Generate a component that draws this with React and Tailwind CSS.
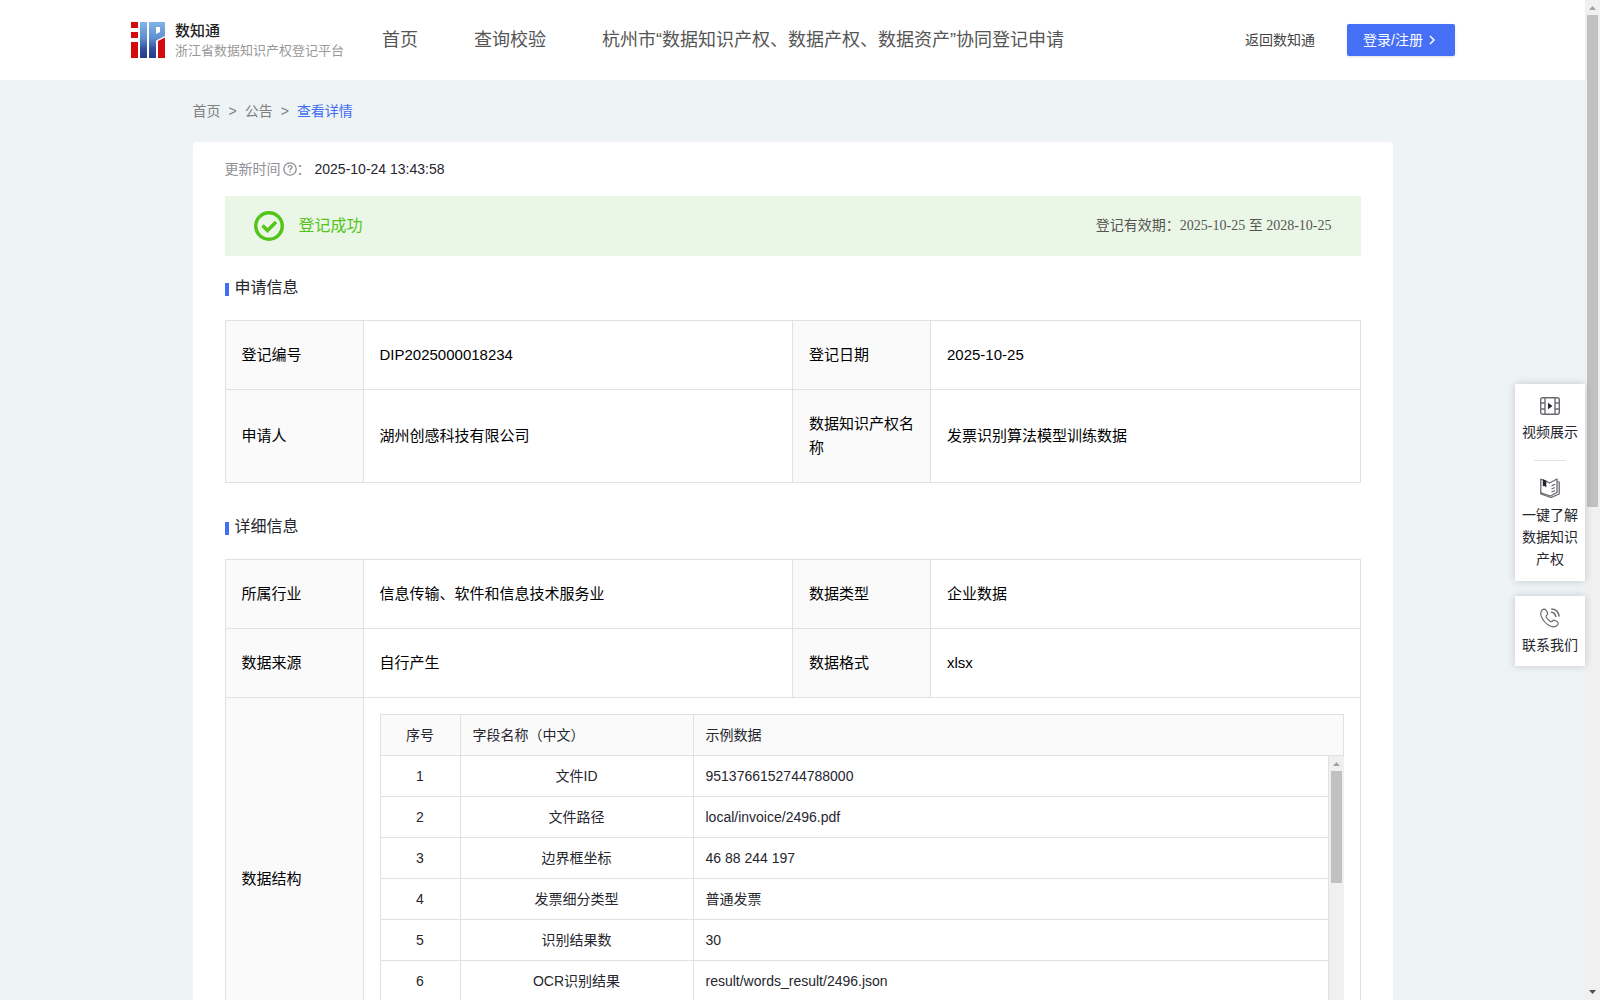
import React from "react";

const sampleRows = [
  ["文件ID", "9513766152744788000"],
  ["文件路径", "local/invoice/2496.pdf"],
  ["边界框坐标", "46 88 244 197"],
  ["发票细分类型", "普通发票"],
  ["识别结果数", "30"],
  ["OCR识别结果", "result/words_result/2496.json"],
];

function Logo() {
  return (
    <svg width="34" height="36" viewBox="0 0 34 36" aria-hidden="true">
      <defs>
        <linearGradient id="logoBlue" x1="0" y1="0" x2="0" y2="36" gradientUnits="userSpaceOnUse">
          <stop offset="0" stopColor="#83b4e8" />
          <stop offset="0.45" stopColor="#5f8fd0" />
          <stop offset="0.75" stopColor="#34509c" />
          <stop offset="1" stopColor="#263a88" />
        </linearGradient>
      </defs>
      <path d="M0 0h7v6H0zM0 10h7v6H0zM0 20h7v16H0z" fill="#d30a0e" />
      <path d="M9 0h7v36H9z" fill="url(#logoBlue)" />
      <path fillRule="evenodd" d="M18 0h16v14l-9 4.500V36h-7zM25 5v7l4-2V5z" fill="url(#logoBlue)" />
      <path d="M27 19l7-3.500V36h-7z" fill="#d30a0e" />
    </svg>
  );
}

function SuccessIcon() {
  return (
    <svg width="30" height="30" viewBox="0 0 30 30" fill="none" stroke="#52c41a" aria-hidden="true">
      <circle cx="15" cy="15" r="13.250" strokeWidth="3.500" />
      <path d="M8.500 14.500l5 5 8.500-8.500" strokeWidth="3.500" />
    </svg>
  );
}

function HelpIcon() {
  return (
    <svg width="14" height="14" viewBox="0 0 14 14" fill="none" stroke="#8f8f94" strokeWidth="1.300" aria-hidden="true">
      <circle cx="7" cy="7" r="6.200" />
      <path d="M5.100 5.600c0-2.500 3.800-2.500 3.800-.2 0 1.300-1.900 1.300-1.900 2.800M7 9.300v1.200" />
    </svg>
  );
}

function VideoIcon() {
  return (
    <svg width="20" height="18" viewBox="0 0 20 18" fill="none" stroke="#6a6b72" strokeWidth="1.400" aria-hidden="true">
      <rect x="0.700" y="0.700" width="18.600" height="16.600" rx="2" />
      <path d="M5 1v16M15 1v16M1 6h4M1 12h4M15 6h4M15 12h4" />
      <path d="M8 5.800v6.400l4.500-3.200z" fill="#26262e" stroke="none" />
    </svg>
  );
}

function BookIcon() {
  return (
    <svg width="20" height="20" viewBox="0 0 20 20" fill="none" stroke="#6a6b72" strokeWidth="1.300" strokeLinejoin="round" aria-hidden="true">
      <path d="M5.500 2.800L9.500 5 17 1v13.500L10.500 18 .8 14.800V1.200L3 2" />
      <path d="M17.500 3.500l1.700.5v12L11 19.500.8 16v-2" />
      <path d="M11.500 8l3.500-1.800M11.500 11l3.500-1.500M11.500 14l3.500-1.500" />
      <path d="M2.800 1L6.300 2.800v6.700L4.500 8l-1.700.3z" fill="#26262e" stroke="none" />
    </svg>
  );
}

function PhoneIcon() {
  return (
    <svg width="20" height="20" viewBox="0 0 20 20" fill="none" stroke="#6a6b72" strokeWidth="1.200" strokeLinejoin="round" strokeLinecap="round" aria-hidden="true">
      <path d="M2 2.200C3.500.7 5 .7 6 2.200l1.300 2.200c.7 1.200.3 2-.6 2.800-.8.700-.7 1.400-.2 2.300.9 1.500 2 2.700 3.600 3.700.9.600 1.700.6 2.400-.2.800-.9 1.600-1.200 2.700-.5l2 1.300c1.400 1 1.300 2.200.2 3.400-1.900 2-4.300 2.200-7.200.8C6 16 3 12.700 1.400 8.600.4 5.900.4 3.800 2 2.200z" />
      <path d="M11.500 4.200c2.300.3 3.800 1.800 4.200 4.200M11.800 1c4.100.4 6.700 3 7.200 7" strokeWidth="1.500" />
    </svg>
  );
}

function ScrollBar({ thumb, end }) {
  return (
    <div className="flex w-[15px] shrink-0 flex-col items-center bg-[#f0f0f0]" aria-hidden="true">
      <svg className="shrink-0" width="15" height="15" viewBox="0 0 15 15">
        <path d="M4 10h7L7.500 6z" fill="#a3a3a3" />
      </svg>
      <div className={thumb} />
      {end && (
        <svg className="mt-auto shrink-0" width="15" height="15" viewBox="0 0 15 15">
          <path d="M4 5h7L7.500 9z" fill="#505050" />
        </svg>
      )}
    </div>
  );
}

function SectionTitle({ children }) {
  return (
    <h2 className="flex items-center gap-1.5 text-base leading-6 text-[#26262e]">
      <span className="mt-0.5 h-[13px] w-1 bg-[#416df5]" />
      {children}
    </h2>
  );
}

const cell = "border border-[#e1e1e1] px-4 py-[22px] text-left font-normal";

function Label({ children }) {
  return <th scope="row" className={`${cell} bg-[#fafafa]`}>{children}</th>;
}

function Value({ children }) {
  return <td className={cell}>{children}</td>;
}

function InfoTable({ rows, children }) {
  return (
    <table className="w-full table-fixed border-collapse text-[15px] leading-6 text-black">
      <colgroup>
        <col className="w-[138px]" />
        <col />
        <col className="w-[138px]" />
        <col />
      </colgroup>
      <tbody>
        {rows.map(([a, b, c, d]) => (
          <tr key={a}>
            <Label>{a}</Label>
            <Value>{b}</Value>
            <Label>{c}</Label>
            <Value>{d}</Value>
          </tr>
        ))}
        {children}
      </tbody>
    </table>
  );
}

function FieldCols() {
  return (
    <colgroup>
      <col className="w-20" />
      <col className="w-[233px]" />
      <col />
    </colgroup>
  );
}

function FieldTable() {
  return (
    <div className="text-sm leading-[22px] text-[#26262e]">
      <table className="w-full table-fixed border-collapse bg-[#fafafa]">
        <FieldCols />
        <thead>
          <tr>
            <th className="border border-[#e1e1e1] py-[9px] font-normal">序号</th>
            <th className="border border-[#e1e1e1] px-3 py-[9px] text-left font-normal">字段名称（中文）</th>
            <th className="border border-[#e1e1e1] px-3 py-[9px] text-left font-normal">示例数据</th>
          </tr>
        </thead>
      </table>
      <div className="flex h-[287px] overflow-hidden">
        <div className="min-w-0 flex-1">
          <table className="w-full table-fixed border-collapse">
            <FieldCols />
            <tbody>
              {sampleRows.map(([name, value], i) => (
                <tr key={name}>
                  <td className="border border-t-0 border-[#e1e1e1] py-[9px] text-center">{i + 1}</td>
                  <td className="border border-t-0 border-[#e1e1e1] px-3 py-[9px] text-center">{name}</td>
                  <td className="border border-t-0 border-[#e1e1e1] px-3 py-[9px]">{value}</td>
                </tr>
              ))}
            </tbody>
          </table>
        </div>
        <ScrollBar thumb="h-28 w-[11px] bg-[#c1c1c1]" />
      </div>
    </div>
  );
}

function Header() {
  return (
    <header className="flex h-20 items-center bg-white px-[130px]">
      <div className="flex w-[252px] shrink-0 items-center gap-2.5 pl-px">
        <Logo />
        <div className="pt-0.5">
          <div className="text-[15px] leading-5 font-medium text-[#222]">数知通</div>
          <div className="text-[13px] leading-5 whitespace-nowrap text-[#999]">浙江省数据知识产权登记平台</div>
        </div>
      </div>
      <nav className="flex gap-14 text-lg leading-6 whitespace-nowrap text-[#555]">
        <a href="#home">首页</a>
        <a href="#query">查询校验</a>
        <a href="#apply">杭州市“数据知识产权、数据产权、数据资产”协同登记申请</a>
      </nav>
      <a href="#back" className="ml-auto text-sm whitespace-nowrap text-[#444]">返回数知通</a>
      <button className="ml-8 flex h-8 w-[108px] items-center gap-1 rounded-xs bg-[#456ff5] pl-4 text-sm whitespace-nowrap text-white shadow-sm">
        登录/注册
        <svg width="10" height="10" viewBox="0 0 10 10" fill="none" stroke="currentColor" strokeWidth="1.500" aria-hidden="true">
          <path d="M3 1l4 4-4 4" />
        </svg>
      </button>
    </header>
  );
}

const sideItem = "flex w-full flex-col items-center gap-1.5";

function SideBar() {
  return (
    <aside className="absolute top-[384px] right-[15px] flex w-[70px] flex-col gap-[15px] text-sm leading-[22px] text-[#26262e]">
      <div className="flex flex-col items-center bg-white px-1.5 pt-[13px] pb-[11px] shadow-[0_0_8px_rgba(0,0,0,0.18)]">
        <button className={sideItem}>
          <VideoIcon />
          视频展示
        </button>
        <div className="my-[17px] h-px w-8 bg-[#e1e1e1]" />
        <button className={sideItem}>
          <BookIcon />
          一键了解数据知识产权
        </button>
      </div>
      <div className="bg-white px-1.5 pt-3 pb-2.5 shadow-[0_0_8px_rgba(0,0,0,0.18)]">
        <button className={sideItem}>
          <PhoneIcon />
          联系我们
        </button>
      </div>
    </aside>
  );
}

export default function App() {
  return (
    <div className="flex h-screen overflow-hidden bg-[#eef3f6] font-['Liberation_Sans','Noto_Sans_CJK_SC',sans-serif]">
      <div className="min-w-0 flex-1 overflow-hidden">
        <Header />
        <main className="mx-auto max-w-[1200px]">
          <nav className="flex h-[62px] items-center gap-2 text-sm text-[#808080]">
            <a href="#home">首页</a>
            <span>&gt;</span>
            <a href="#notice">公告</a>
            <span>&gt;</span>
            <a href="#detail" className="text-[#416df5]">查看详情</a>
          </nav>
          <div className="rounded bg-white px-8 pt-4">
            <div className="flex items-center text-sm leading-[22px]">
              <span className="mr-0.5 text-[#909096]">更新时间</span>
              <HelpIcon />
              <span className="text-[#909096]">：</span>
              <time className="ml-1 text-[#26262e]">2025-10-24 13:43:58</time>
            </div>
            <div className="mt-4 flex h-[60px] items-center bg-[#ebf7e6] px-[29px]">
              <SuccessIcon />
              <span className="ml-[15px] text-base text-[#52c41a]">登记成功</span>
              <span className="ml-auto font-['Liberation_Serif','Noto_Sans_CJK_SC',serif] text-sm text-[#555]">
                登记有效期：2025-10-25 至 2028-10-25
              </span>
            </div>
            <div className="mt-5 mb-5">
              <SectionTitle>申请信息</SectionTitle>
            </div>
            <InfoTable
              rows={[
                ["登记编号", "DIP2025000018234", "登记日期", "2025-10-25"],
                ["申请人", "湖州创感科技有限公司", "数据知识产权名称", "发票识别算法模型训练数据"],
              ]}
            />
            <div className="mt-8 mb-5">
              <SectionTitle>详细信息</SectionTitle>
            </div>
            <InfoTable
              rows={[
                ["所属行业", "信息传输、软件和信息技术服务业", "数据类型", "企业数据"],
                ["数据来源", "自行产生", "数据格式", "xlsx"],
              ]}
            >
              <tr>
                <Label>数据结构</Label>
                <td colSpan={3} className="border border-[#e1e1e1] p-4">
                  <FieldTable />
                </td>
              </tr>
            </InfoTable>
          </div>
        </main>
      </div>
      <ScrollBar thumb="h-[492px] w-[11px] shrink-0 bg-[#c1c1c1]" end />
      <SideBar />
    </div>
  );
}
